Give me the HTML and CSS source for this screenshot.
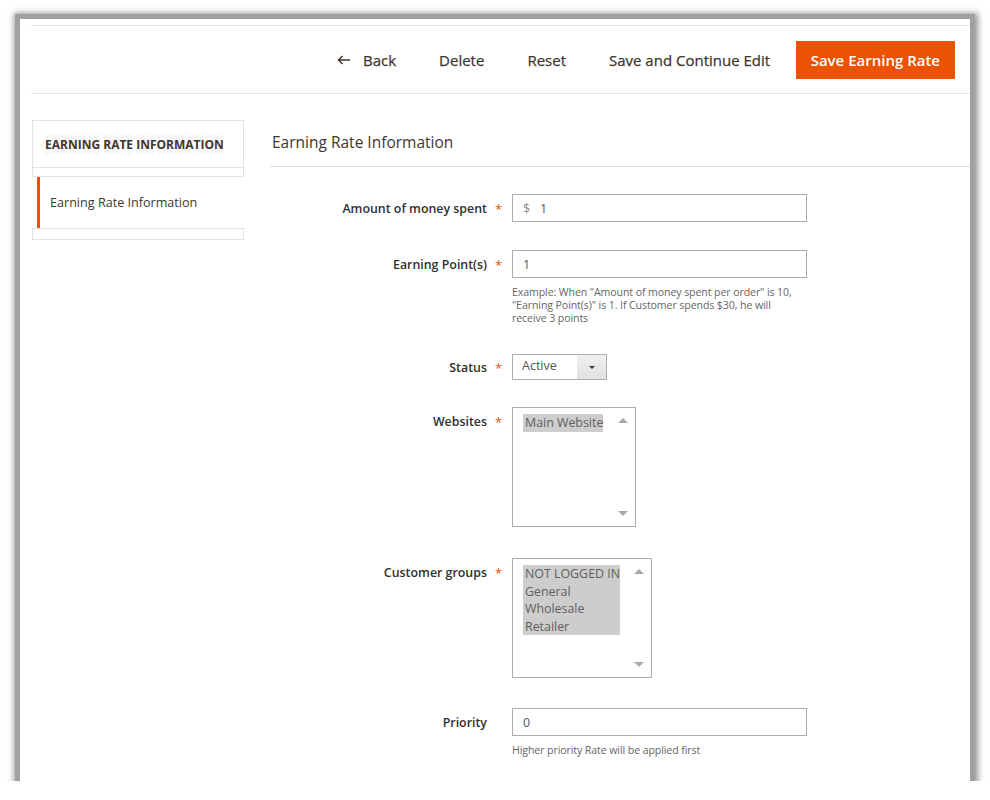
FILE: index.html
```html
<!DOCTYPE html>
<html lang="en">
<head>
<meta charset="utf-8">
<title>Earning Rate</title>
<link rel="stylesheet" href="styles.css">
</head>
<body>
<div class="frame">
  <div class="page">
    <header class="page-actions">
      <button class="action back" type="button">
        <svg class="back-icon" width="14" height="10" viewBox="0 0 14 10"><path d="M13 5H1.5M5.5 1L1.5 5l4 4" fill="none" stroke="#41362f" stroke-width="1.5"/></svg>
        <span>Back</span>
      </button>
      <button class="action" type="button">Delete</button>
      <button class="action" type="button">Reset</button>
      <button class="action" type="button">Save and Continue Edit</button>
      <button class="action primary" type="button">Save Earning Rate</button>
    </header>

    <div class="columns">
      <aside class="side">
        <div class="side-title">EARNING RATE INFORMATION</div>
        <div class="side-strip"></div>
        <div class="side-item">Earning Rate Information</div>
        <div class="side-strip last"></div>
      </aside>

      <main class="main">
        <h2 class="section-title">Earning Rate Information</h2>

        <div class="form">
          <div class="row r-amount">
            <label class="label">Amount of money spent</label>
            <span class="req">*</span>
            <div class="control">
              <div class="input"><span class="addon">$</span><span class="value">1</span></div>
            </div>
          </div>

          <div class="row r-points">
            <label class="label">Earning Point(s)</label>
            <span class="req">*</span>
            <div class="control">
              <div class="input"><span class="value">1</span></div>
              <p class="note">Example: When "Amount of money spent per order" is 10, "Earning Point(s)" is 1. If Customer spends $30, he will receive 3 points</p>
            </div>
          </div>

          <div class="row r-status">
            <label class="label">Status</label>
            <span class="req">*</span>
            <div class="control">
              <div class="select"><span class="select-text">Active</span><span class="select-arrow"><i class="tri-down small"></i></span></div>
            </div>
          </div>

          <div class="row r-websites">
            <label class="label">Websites</label>
            <span class="req">*</span>
            <div class="control">
              <div class="multi multi-web">
                <div class="selected"><div>Main Website</div></div>
                <i class="tri-up scroll-up"></i>
                <i class="tri-down scroll-down"></i>
              </div>
            </div>
          </div>

          <div class="row r-groups">
            <label class="label">Customer groups</label>
            <span class="req">*</span>
            <div class="control">
              <div class="multi multi-groups">
                <div class="selected">
                  <div>NOT LOGGED IN</div>
                  <div>General</div>
                  <div>Wholesale</div>
                  <div>Retailer</div>
                </div>
                <i class="tri-up scroll-up"></i>
                <i class="tri-down scroll-down"></i>
              </div>
            </div>
          </div>

          <div class="row r-priority">
            <label class="label">Priority</label>
            <span class="req none"></span>
            <div class="control">
              <div class="input"><span class="value">0</span></div>
              <p class="note">Higher priority Rate will be applied first</p>
            </div>
          </div>
        </div>
      </main>
    </div>
  </div>
</div>
</body>
</html>
```

FILE: styles.css
```css
* { box-sizing: border-box; }

html, body {
  margin: 0;
  padding: 0;
  background: #ffffff;
}

body {
  font-family: "Open Sans", "Liberation Sans", sans-serif;
  color: #303030;
  padding: 19px 0 0 20px;
}

.frame {
  width: 950px;
  height: 762px;
  background: #ffffff;
  overflow: hidden;
  box-shadow: 0 0 0 5px #a0a0a0, 1px 1px 6px 7px rgba(125, 125, 125, 0.8);
}

.page {
  padding-left: 11px;
}

/* ---------- header actions ---------- */
.page-actions {
  margin-top: 6px;
  height: 69px;
  border-top: 1px solid #e6e6e6;
  border-bottom: 1px solid #e6e6e6;
  display: flex;
  align-items: center;
  justify-content: flex-end;
  padding-right: 15px;
}

.action {
  font-family: inherit;
  font-size: 15px;
  font-weight: 400;
  color: #41362f;
  background: none;
  border: 0;
  padding: 0 21.5px;
  height: 38px;
  display: flex;
  align-items: center;
  cursor: pointer;
  -webkit-text-stroke: 0.25px #41362f;
}

.action.back {
  gap: 12px;
}

.back-icon { display: block; }

.action.primary {
  background: #eb5202;
  color: #ffffff;
  font-weight: 600;
  padding: 0 15px;
  margin-left: 4px;
  -webkit-text-stroke: 0;
}

/* ---------- columns ---------- */
.columns {
  display: flex;
  align-items: flex-start;
}

.side {
  width: 212px;
  margin: 26px 0 0 1px;
  flex: none;
}

.side-title {
  height: 48px;
  border: 1px solid #e3e3e3;
  display: flex;
  align-items: center;
  padding-left: 12px;
  font-size: 12px;
  font-weight: 700;
  color: #41362f;
  text-shadow: 0 -5px 2px rgba(120, 120, 160, 0.12), 0 5px 2px rgba(120, 120, 160, 0.1);
}

.side-strip {
  height: 9px;
  border: 1px solid #e3e3e3;
  border-top: 0;
}

.side-strip.last {
  height: 12px;
  border-top: 1px solid #e3e3e3;
}

.side-item {
  height: 51px;
  margin-left: 5px;
  border-left: 3px solid #eb5202;
  padding-left: 10px;
  display: flex;
  align-items: center;
  font-size: 12.6px;
  color: #41362f;
}

.main {
  flex: 1;
  margin: 26px 0 0 26px;
}

.section-title {
  margin: 0;
  font-size: 15.5px;
  font-weight: 400;
  line-height: 20px;
  color: #41362f;
  padding: 12px 0 14px 2px;
  border-bottom: 1px solid #dcdcdc;
}

/* ---------- form ---------- */
.form {
  display: flex;
  flex-direction: column;
}

.row {
  display: grid;
  grid-template-columns: 217px 25px 1fr;
  align-items: start;
}

.r-amount   { margin-top: 27px; }
.r-points   { margin-top: 27px; }
.r-status   { margin-top: 29px; }
.r-websites { margin-top: 26px; }
.r-groups   { margin-top: 31px; }
.r-priority { margin-top: 30px; }

.label {
  text-align: right;
  font-size: 12.4px;
  font-weight: 600;
  line-height: 29px;
  color: #303030;
}

.req {
  color: #eb5202;
  font-size: 13px;
  line-height: 28px;
  padding: 1px 0 0 8px;
  height: 28px;
}

.r-status .label { line-height: 27px; }
.r-status .req { line-height: 26px; height: 26px; }

.control { min-width: 0; }

.input {
  width: 295px;
  height: 28px;
  border: 1px solid #adadad;
  display: flex;
  align-items: center;
  padding: 0 10px;
  font-size: 12.5px;
  color: #555555;
}

.addon {
  color: #8a8a8a;
  width: 17px;
}

.note {
  margin: 8px 0 0;
  width: 295px;
  font-size: 10.6px;
  line-height: 13px;
  letter-spacing: -0.1px;
  color: #666666;
}

.select {
  width: 95px;
  height: 26px;
  border: 1px solid #adadad;
  display: flex;
  font-size: 12.5px;
  color: #555555;
}

.select-text {
  flex: 1;
  padding: 2px 0 0 9px;
  line-height: 18px;
}

.select-arrow {
  width: 29px;
  background: linear-gradient(#f0f0f0, #e2e2e2);
  display: flex;
  align-items: center;
  justify-content: center;
}

.tri-down, .tri-up {
  display: block;
  width: 0;
  height: 0;
  border-left: 5px solid transparent;
  border-right: 5px solid transparent;
}

.tri-down { border-top: 5px solid #a8a8a8; }
.tri-up { border-bottom: 5px solid #a8a8a8; }

.tri-down.small {
  border-left-width: 3px;
  border-right-width: 3px;
  border-top: 3px solid #41362f;
}

.multi {
  position: relative;
  height: 120px;
  border: 1px solid #adadad;
  padding: 6px 10px;
  font-size: 12.4px;
  line-height: 17.5px;
  color: #5e5e5e;
}

.multi-web { width: 124px; }
.multi-groups { width: 140px; }

.selected {
  display: inline-block;
  background: #cdcdcd;
  padding-left: 2px;
  white-space: nowrap;
}

.scroll-up {
  position: absolute;
  right: 7px;
  top: 10px;
}

.scroll-down {
  position: absolute;
  right: 7px;
  bottom: 10px;
}
```
